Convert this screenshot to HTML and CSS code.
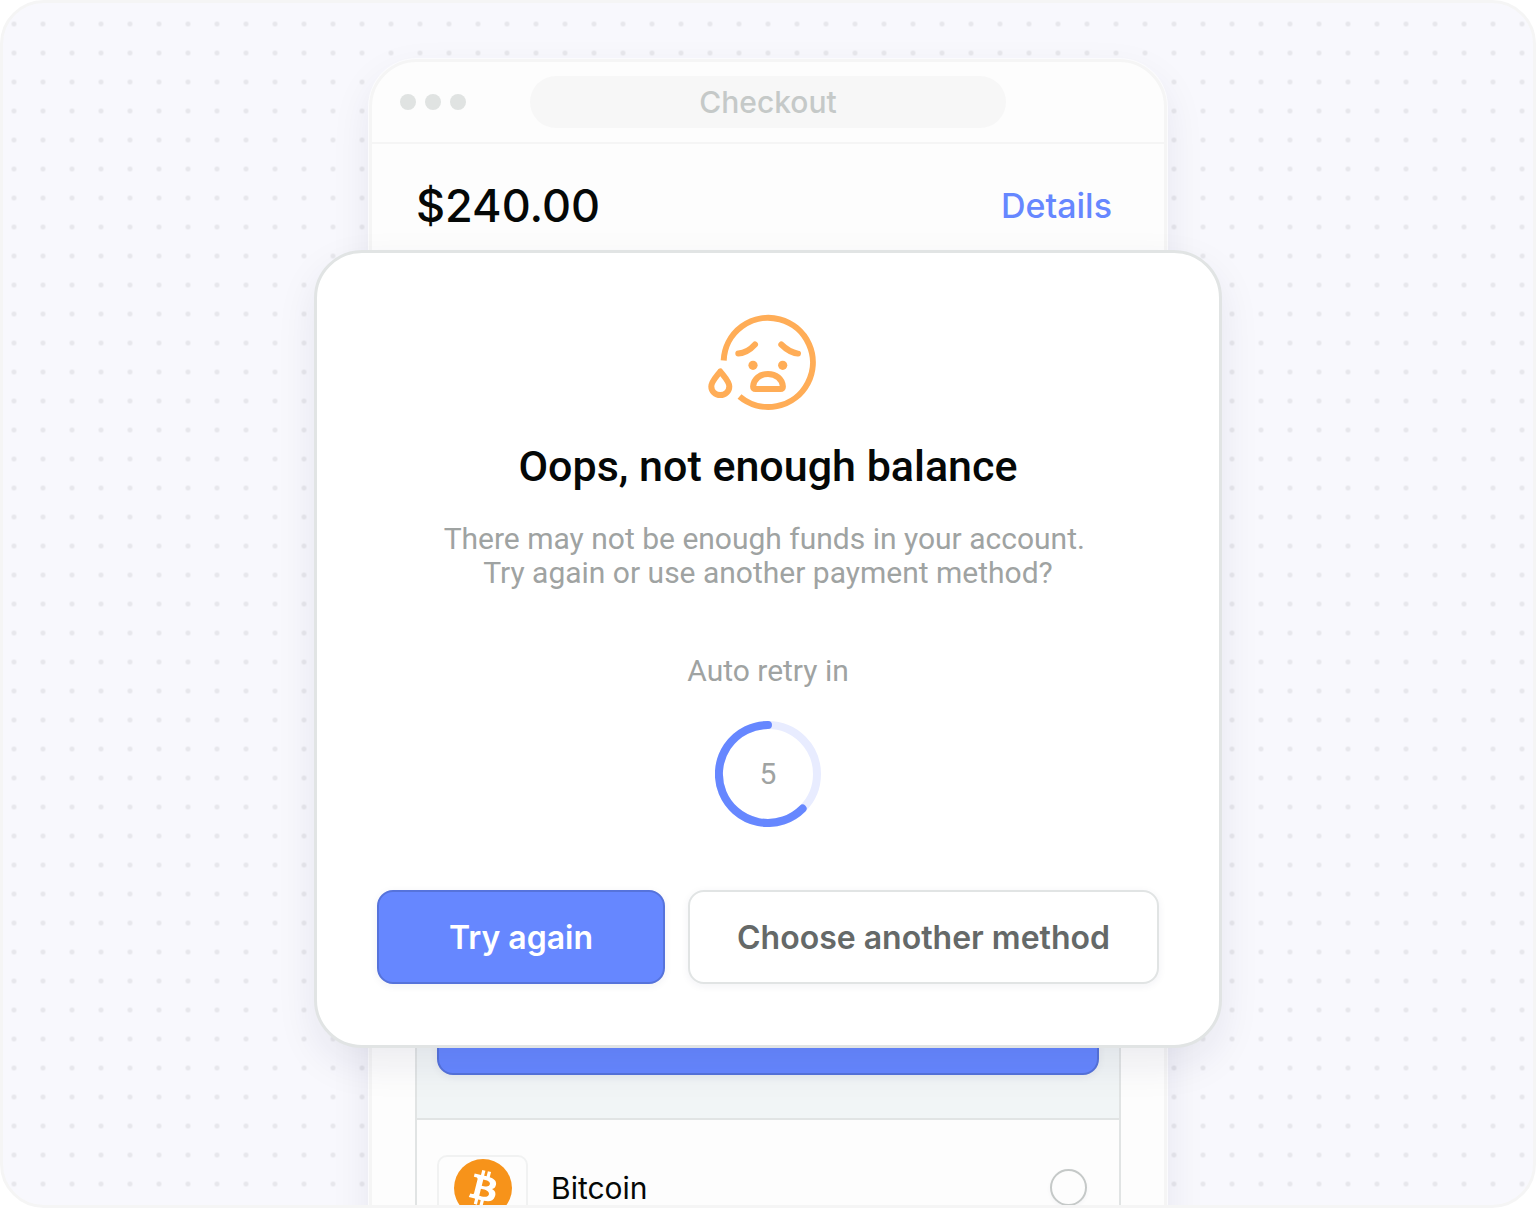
FILE: index.html
```html
<!DOCTYPE html>
<html lang="en">
<head>
  <meta charset="UTF-8">
  <meta name="viewport" content="width=device-width, initial-scale=1.0">
  <title>Checkout</title>
  <link rel="stylesheet" href="styles.css">
</head>
<body>
  <div class="stage">
    <main class="window">
      <header class="window-bar">
        <div class="window-dots"><span></span><span></span><span></span></div>
        <div class="window-title">Checkout</div>
      </header>

      <div class="summary">
        <h1 class="amount">$240.00</h1>
        <a class="details" href="#">Details</a>
      </div>

      <div class="methods">
        <div class="method-open">
          <button class="btn btn-primary" type="button" aria-label="Pay"></button>
        </div>
        <label class="method">
          <span class="method-logo">
            <svg viewBox="0 0 32 32" aria-hidden="true">
              <circle cx="16" cy="16" r="16" fill="#f7931a"/>
              <path fill="#fff" d="M23.189 14.02c.314-2.096-1.283-3.223-3.465-3.975l.708-2.84-1.728-.43-.69 2.765c-.454-.114-.92-.22-1.385-.326l.695-2.783L15.596 6l-.708 2.839c-.376-.086-.746-.17-1.104-.26l.002-.009-2.384-.595-.46 1.846s1.283.294 1.256.312c.7.175.826.638.805 1.006l-.806 3.235c.048.012.11.03.18.057l-.183-.045-1.13 4.532c-.086.212-.303.531-.793.41.018.025-1.256-.313-1.256-.313l-.858 1.978 2.25.561c.418.105.828.215 1.231.318l-.715 2.872 1.727.43.708-2.84c.472.127.93.245 1.378.357l-.706 2.828 1.728.43.715-2.866c2.948.558 5.164.333 6.097-2.333.752-2.146-.037-3.385-1.588-4.192 1.13-.26 1.98-1.003 2.207-2.538zm-3.95 5.538c-.533 2.147-4.148.986-5.32.695l.95-3.805c1.172.293 4.929.872 4.37 3.11zm.535-5.569c-.487 1.953-3.495.96-4.47.717l.86-3.45c.975.243 4.118.696 3.61 2.733z"/>
            </svg>
          </span>
          <span class="method-name">Bitcoin</span>
          <input class="method-radio" type="radio" name="method" value="bitcoin">
        </label>
      </div>
    </main>

    <section class="modal" role="dialog" aria-labelledby="modal-title">
      <svg class="face" viewBox="18 13 120 98" fill="none" stroke="#ffad57" stroke-width="6" aria-hidden="true">
        <path d="M33.7 60.5A44.6 44.6 0 1 1 49.5 96.5"/>
        <g stroke-linecap="round" stroke-linejoin="round">
          <path d="M48.3 53.6Q57.5 52.8 65 44.5"/>
          <path d="M91.3 44.5Q99.3 52.4 108 53.6"/>
          <path d="M65.5 89H90.5Q93 89 92.9 86.5C92.3 79 86 74 78 74S63.7 79 63.1 86.5Q63 89 65.5 89Z"/>
          <path d="M30.3 71.5C26.5 76.5 21.3 81.5 21.3 86.5a9 8.6 0 0 0 18 0c0-5-5.2-10-9-15Z"/>
        </g>
        <g fill="#ffad57" stroke="none">
          <circle cx="63" cy="65.3" r="4.6"/>
          <circle cx="92.7" cy="65.3" r="4.6"/>
        </g>
      </svg>

      <h2 class="modal-title" id="modal-title">Oops, not enough balance</h2>
      <p class="modal-text">There may not be enough funds in your account.&nbsp;<br>Try again or use another payment method?</p>

      <p class="retry-label">Auto retry in</p>
      <div class="timer">
        <svg class="timer-ring" viewBox="0 0 106 106" fill="none" stroke-width="8" aria-hidden="true">
          <circle cx="53" cy="53" r="49" stroke="#e8ecff"/>
          <path d="M53 4A49 49 0 1 0 87.6 87.6" stroke="#6687ff" stroke-linecap="round"/>
        </svg>
        <span class="timer-value">5</span>
      </div>

      <div class="actions">
        <button class="btn btn-primary" type="button">Try again</button>
        <button class="btn btn-secondary" type="button">Choose another method</button>
      </div>
    </section>
  </div>
</body>
</html>
```
FILE: styles.css
```css
* {
  margin: 0;
  padding: 0;
  box-sizing: border-box;
}

body {
  font-family: Inter, "Liberation Sans", sans-serif;
  background: #fff;
  color: #050807;
}

.stage {
  position: relative;
  height: 100vh;
  padding: 56px 24px 0;
  border: 3px solid #f5f5f5;
  border-radius: 44px;
  overflow: hidden;
  background-color: #f8f8fd;
  background-image: radial-gradient(circle, #e7e7ec 2px, transparent 3px);
  background-size: 29px 29px;
  background-position: center;
}

/* Checkout window */
.window {
  max-width: 798px;
  margin: 0 auto;
  background: #fdfdfd;
  border: 3px solid #f5f5f5;
  border-radius: 48px 48px 0 0;
  box-shadow: 0 0 0 1px #fbfbfd, 0 16px 40px rgba(30, 30, 80, 0.08);
}

.window-bar {
  display: grid;
  grid-template-columns: 1fr 476px 1fr;
  align-items: center;
  height: 82px;
  padding: 0 28px;
  border-bottom: 2px solid #f5f5f5;
}

.window-dots {
  display: flex;
  gap: 9px;
}

.window-dots span {
  width: 16px;
  height: 16px;
  border-radius: 50%;
  background: #e0e3e2;
}

.window-title {
  padding: 8px 24px;
  border-radius: 26px;
  background: #f7f7f7;
  color: #c5c9c8;
  font-size: 30px;
  font-weight: 500;
  line-height: 36px;
  text-align: center;
}

.summary {
  display: flex;
  align-items: center;
  justify-content: space-between;
  padding: 34px 52px 50px 44px;
}

.amount {
  font-size: 45px;
  font-weight: 500;
  line-height: 56px;
}

.details {
  color: #6687ff;
  font-size: 34px;
  font-weight: 500;
  line-height: 40px;
  text-decoration: none;
}

.methods {
  margin: 0 43px;
  border: 2px solid #e1e4e4;
}

.method-open {
  display: flex;
  flex-direction: column;
  justify-content: flex-end;
  min-height: 834px;
  padding: 20px 20px 43px;
  background: #f1f5f6;
  border-bottom: 2px solid #e1e4e4;
}

.method {
  display: flex;
  align-items: center;
  gap: 23px;
  padding: 35px 32px 35px 20px;
}

.method-logo {
  display: flex;
  align-items: center;
  justify-content: center;
  width: 91px;
  height: 65px;
  border: 2px solid #f1f2f2;
  border-radius: 10px;
}

.method-logo svg {
  width: 58px;
  height: 58px;
}

.method-name {
  flex: 1;
  font-size: 30px;
  line-height: 36px;
}

.method-radio {
  appearance: none;
  width: 37px;
  height: 37px;
  border: 2px solid #c5c9c8;
  border-radius: 50%;
  background: #fdfdfd;
  box-shadow: 0 2px 4px rgba(30, 30, 80, 0.04);
}

/* Balance error dialog */
.modal {
  position: absolute;
  top: 247px;
  left: 50%;
  display: flex;
  flex-direction: column;
  align-items: center;
  width: 908px;
  max-width: 100%;
  padding: 60px 60px 61px;
  transform: translateX(-50%);
  background: #fff;
  border: 3px solid #e1e4e4;
  border-radius: 48px;
  box-shadow: 0 16px 40px rgba(30, 30, 80, 0.08);
  font-family: Roboto, "Liberation Sans", sans-serif;
  text-align: center;
}

.face {
  width: 120px;
  height: 98px;
}

.modal-title {
  margin-top: 31px;
  font-size: 43px;
  font-weight: 500;
  line-height: 48px;
}

.modal-text,
.retry-label {
  color: #9fa3a2;
  font-size: 30px;
  line-height: 34px;
}

.modal-text {
  margin-top: 32px;
}

.retry-label {
  margin-top: 64px;
}

.timer {
  display: grid;
  place-items: center;
  margin-top: 33px;
}

.timer-ring,
.timer-value {
  grid-area: 1 / 1;
}

.timer-ring {
  width: 106px;
  height: 106px;
}

.timer-value {
  color: #9fa3a2;
  font-size: 30px;
  line-height: 34px;
}

.actions {
  display: flex;
  gap: 23px;
  width: 100%;
  margin-top: 63px;
}

.btn {
  height: 94px;
  border: 2px solid;
  border-radius: 16px;
  box-shadow: 0 2px 8px rgba(30, 30, 80, 0.06);
  font-family: Inter, "Liberation Sans", sans-serif;
  font-size: 32px;
  font-weight: 600;
  cursor: pointer;
}

.btn-primary {
  background: #6687ff;
  border-color: #5673db;
  color: #fff;
}

.btn-secondary {
  flex: 1;
  background: #fff;
  border-color: #e1e4e4;
  color: #656968;
}

.actions .btn-primary {
  width: 288px;
}
```
